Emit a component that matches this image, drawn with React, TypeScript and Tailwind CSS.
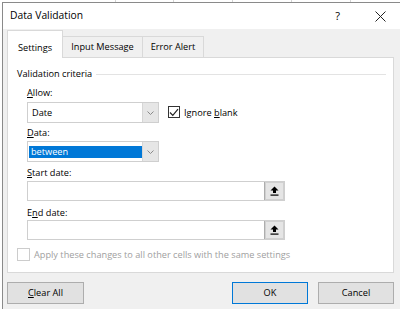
import React from "react";

const font = { fontFamily: '"Open Sans", "Noto Sans", sans-serif' };

function Chevron() {
  return (
    <svg width="7" height="4" viewBox="0 0 7 4">
      <path d="M0.5 0.5 L3.5 3.5 L6.5 0.5" fill="none" stroke="#8a8a8a" strokeWidth="1" />
    </svg>
  );
}

function RefIcon() {
  return (
    <svg width="9" height="10" viewBox="0 0 9 10">
      <path d="M4.5 0.5 L8.5 4.5 L6 4.5 L6 7 L3 7 L3 4.5 L0.5 4.5 Z" fill="#000" />
      <rect x="0.5" y="8.5" width="8" height="1.2" fill="#000" />
    </svg>
  );
}

function Combo({ value, selected }: { value: string; selected?: boolean }) {
  return (
    <div className="flex h-[21px] w-[132px] border border-[#cfcfcf] bg-white">
      <div className="flex flex-1 items-center pl-[1px]">
        {selected ? (
          <div className="flex h-[12px] w-full items-center bg-[#0078d7] pl-[2px] text-[9.2px] text-white">{value}</div>
        ) : (
          <div className="pl-[3px] text-[9.2px] text-black">{value}</div>
        )}
      </div>
      <div className="flex w-[16px] items-center justify-center border-l border-[#d6d6d6] bg-[#e6e6e6]">
        <Chevron />
      </div>
    </div>
  );
}

function RefInput() {
  return (
    <div className="flex h-[20px] w-[258px] border border-[#cfcfcf] bg-white">
      <div className="flex-1" />
      <div className="flex w-[20px] items-center justify-center border-l border-[#adadad] bg-[#e5e5e5] shadow-[inset_0_0_0_1px_#d0d0d0]">
        <RefIcon />
      </div>
    </div>
  );
}

function Label({ children, h = 16 }: { children: React.ReactNode; h?: number }) {
  return (
    <div className={`flex items-center text-[9.2px] text-black ${h === 16 ? "h-[16px]" : "h-[15px]"}`}>{children}</div>
  );
}

export default function App() {
  const gridXs = [115, 173, 232, 291, 350];
  return (
    <div className="relative h-[309px] w-[400px] overflow-hidden bg-white" style={font}>
      {/* spreadsheet strip behind */}
      <div className="flex h-[2px] w-full">
        {gridXs.map((x, i) => (
          <div key={i} className="absolute top-0 h-[2px] w-px bg-[#d4d4d4]" style={{ left: x }} />
        ))}
      </div>
      <div className="flex h-[307px]">
        <div className="w-[2px] bg-white" />
        {/* dialog */}
        <div className="flex flex-1 flex-col border-l border-t border-[#8a8a8a]">
          {/* title bar */}
          <div className="flex h-[26px] items-center bg-white pl-[7px]">
            <div className="text-[10.3px] text-black">Data Validation</div>
            <div className="flex-1" />
            <div className="mr-[35px] text-[11px] text-black">?</div>
            <svg width="11" height="11" viewBox="0 0 11 11" className="mr-[14px]">
              <path d="M0.5 0.5 L10.5 10.5 M10.5 0.5 L0.5 10.5" stroke="#222" strokeWidth="1" />
            </svg>
          </div>
          {/* body */}
          <div className="flex flex-1 flex-col bg-[#f0f0f0] pl-[4px]">
            {/* tabs */}
            <div className="relative z-10 mt-[1px] flex h-[27px] items-start">
              <div className="flex h-[28px] w-[56px] items-end justify-center border-l border-r border-t border-[#d9d9d9] bg-white pb-[4px] text-[9.2px] leading-[12px] text-black">
                Settings
              </div>
              <div className="mt-[6px] flex h-[21px] w-[80px] items-center justify-center border-r border-t border-[#d9d9d9] text-[9.2px] text-black">
                Input Message
              </div>
              <div className="mt-[6px] flex h-[21px] w-[61px] items-center justify-center border-r border-t border-[#d9d9d9] text-[9.2px] text-black">
                Error Alert
              </div>
            </div>
            {/* panel */}
            <div className="flex h-[216px] w-[387px] flex-col border border-[#d9d9d9] bg-white pl-[9px] pt-[8px]">
              <div className="flex h-[16px] items-center">
                <div className="text-[9.2px] text-black">Validation criteria</div>
                <div className="ml-[4px] mr-[7px] h-px flex-1 bg-[#e3e3e3]" />
              </div>
              <div className="pl-[10px]">
                <div className="mt-[3px]">
                  <Label>
                    <span className="underline">A</span>llow:
                  </Label>
                </div>
                <div className="mt-[1px] flex items-center">
                  <Combo value="Date" />
                  <div className="ml-[9px] flex items-center">
                    <div className="flex h-[12px] w-[12px] items-center justify-center border border-[#333] bg-white">
                      <svg width="10" height="9" viewBox="0 0 10 9">
                        <path d="M1 4.5 L3.8 7.3 L9 1.2" fill="none" stroke="#222" strokeWidth="1.2" />
                      </svg>
                    </div>
                    <div className="ml-[4px] text-[9.2px] text-black">
                      Ignore <span className="underline">b</span>lank
                    </div>
                  </div>
                </div>
                <div className="mt-[2px]">
                  <Label>
                    <span className="underline">D</span>ata:
                  </Label>
                </div>
                <Combo value="between" selected />
                <div className="mt-[3px]">
                  <Label>
                    <span className="underline">S</span>tart date:
                  </Label>
                </div>
                <RefInput />
                <div className="mt-[4px]">
                  <Label h={15}>
                    E<span className="underline">n</span>d date:
                  </Label>
                </div>
                <RefInput />
              </div>
              <div className="mt-[8px] flex items-center">
                <div className="h-[13px] w-[13px] border border-[#cccccc] bg-white" />
                <div className="ml-[4px] text-[9.2px] text-[#a0a0a0]">
                  Apply these changes to all other cells with the same settings
                </div>
              </div>
            </div>
            {/* buttons */}
            <div className="mt-[9px] flex items-start">
              <div className="flex h-[22px] w-[77px] items-center justify-center border border-[#adadad] bg-[#e1e1e1] text-[9.2px] text-black">
                <span>
                  <span className="underline">C</span>lear All
                </span>
              </div>
              <div className="flex-1" />
              <div className="flex h-[22px] w-[76px] items-center justify-center border border-[#0078d7] bg-[#e1e1e1] text-[9.2px] text-black">
                OK
              </div>
              <div className="ml-[10px] mr-[6px] flex h-[22px] w-[76px] items-center justify-center border border-[#adadad] bg-[#e1e1e1] text-[9.2px] text-black">
                Cancel
              </div>
            </div>
          </div>
        </div>
      </div>
    </div>
  );
}
